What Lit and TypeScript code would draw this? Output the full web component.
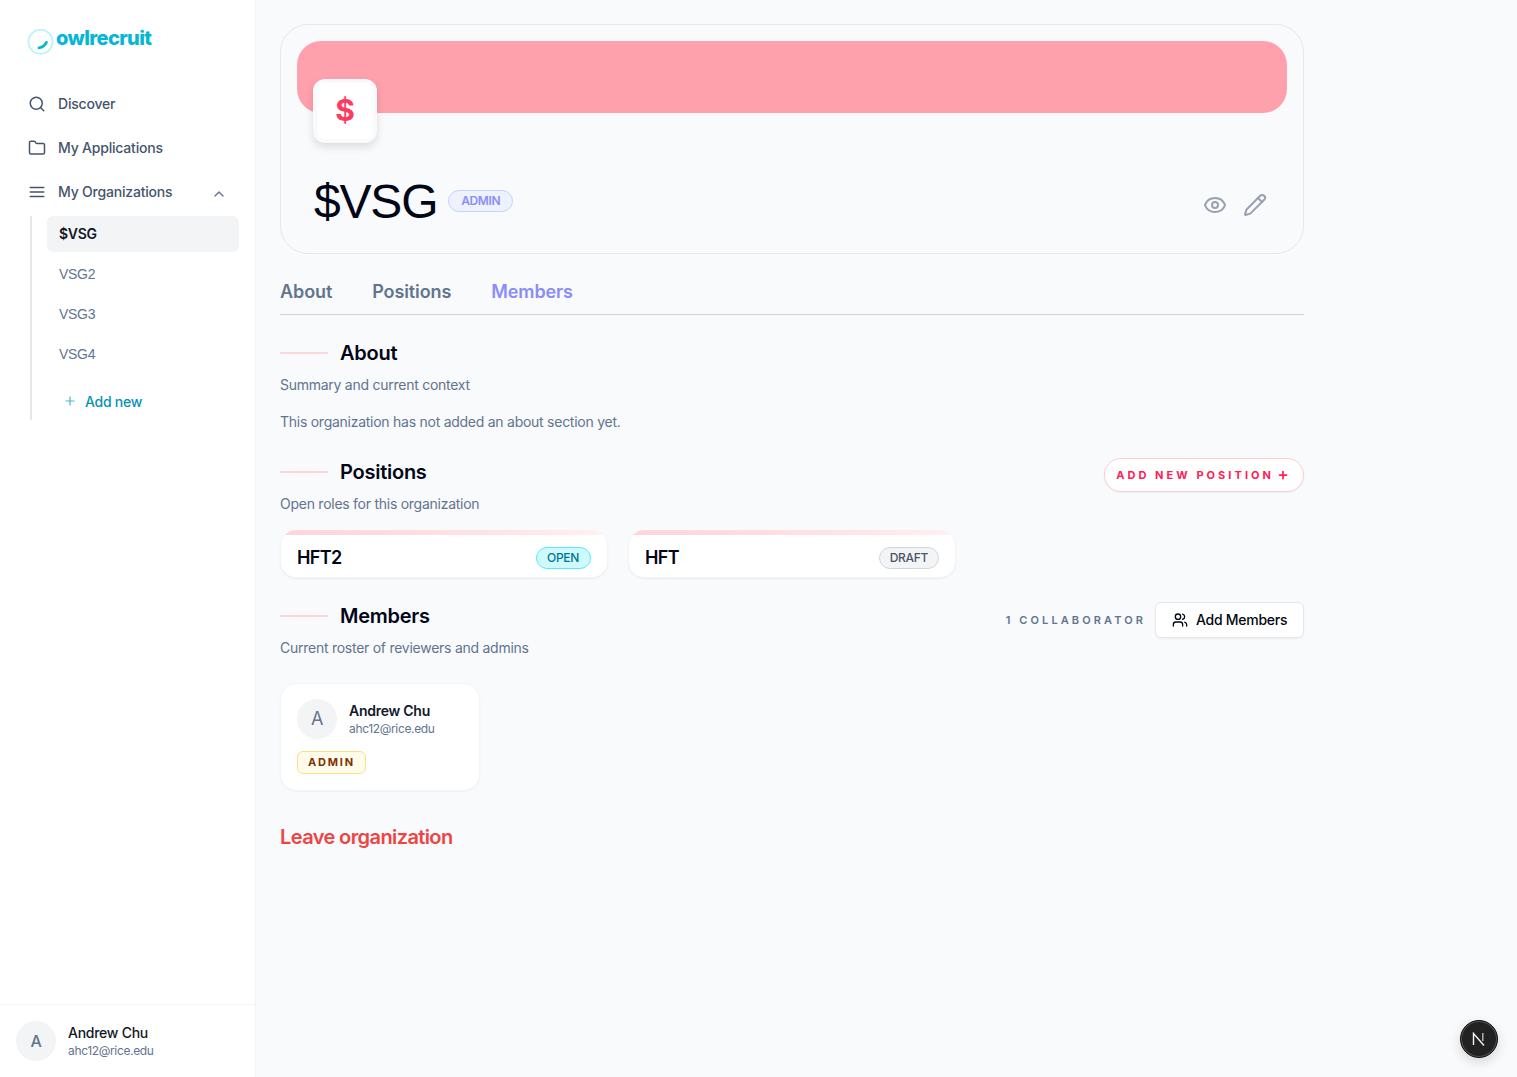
import { LitElement, html, css, svg } from 'lit';
import { customElement } from 'lit/decorators.js';

const icon = (size: number, body: unknown, sw = 2) => html`<svg width=${size} height=${size} viewBox="0 0 24 24" fill="none" stroke="currentColor" stroke-width=${sw} stroke-linecap="round" stroke-linejoin="round">${body}</svg>`;

// lucide shapes
const search = svg`<path d="m21 21-4.34-4.34"/><circle cx="11" cy="11" r="8"/>`;
const folder = svg`<path d="M20 20a2 2 0 0 0 2-2V8a2 2 0 0 0-2-2h-7.9a2 2 0 0 1-1.69-.9L9.6 3.9A2 2 0 0 0 7.93 3H4a2 2 0 0 0-2 2v13a2 2 0 0 0 2 2Z"/>`;
const menu = svg`<path d="M3 6h18M3 12h18M3 18h18"/>`;
const chevron = svg`<path d="m18 15-6-6-6 6"/>`;
const plus = svg`<path d="M5 12h14M12 5v14"/>`;
const eye = svg`<path d="M2.062 12.348a1 1 0 0 1 0-.696 10.75 10.75 0 0 1 19.876 0 1 1 0 0 1 0 .696 10.75 10.75 0 0 1-19.876 0"/><circle cx="12" cy="12" r="3"/>`;
const pencil = svg`<path d="M21.174 6.812a1 1 0 0 0-3.986-3.987L3.842 16.174a2 2 0 0 0-.5.83l-1.321 4.352a.5.5 0 0 0 .623.622l4.353-1.32a2 2 0 0 0 .83-.497z"/><path d="m15 5 4 4"/>`;
const users = svg`<path d="M16 21v-2a4 4 0 0 0-4-4H6a4 4 0 0 0-4 4v2"/><circle cx="9" cy="7" r="4"/><path d="M22 21v-2a4 4 0 0 0-3-3.87"/><path d="M16 3.13a4 4 0 0 1 0 7.75"/>`;

@customElement('app-root')
export class AppRoot extends LitElement {
  static styles = css`
    :host {
      display: block;
      font-family: Inter, "Liberation Sans", sans-serif;
      letter-spacing: -0.26px;
      color: #030712;
    }
    * { box-sizing: border-box; }
    .page {
      display: flex;
      height: 1077px;
      overflow: hidden;
      background: #f8fafc;
      position: relative;
    }
    /* sidebar */
    .side {
      width: 256px;
      flex: none;
      background: #fff;
      border-right: 1px solid #f1f5f9;
      display: flex;
      flex-direction: column;
    }
    .side-top { flex: 1; padding: 24px 16px 0; }
    .logo { display: flex; align-items: flex-start; gap: 1px; height: 58px; padding-left: 11px; }
    .logo svg { margin-top: 4px; flex: none; }
    .logo span {
      font-size: 20px;
      font-weight: 800;
      line-height: 28px;
      letter-spacing: -0.6px;
      color: #06b6d4;
    }
    .nav { display: flex; align-items: center; gap: 12px; height: 44px; padding: 0 12px; font-size: 14px; font-weight: 500; letter-spacing: -0.2px; color: #45556c; }
    .nav svg { flex: none; }
    .nav .label { margin-bottom: 2px; }
    .nav .chev { display: flex; margin-left: auto; margin-top: 4px; color: #62748e; }
    .sub { margin-left: 14px; border-left: 2px solid #e5e7eb; padding-left: 15px; margin-top: 2px; height: 204px; }
    .org { display: flex; align-items: center; height: 36px; padding: 0 12px; margin-bottom: 4px; font-size: 14px; font-family: "Liberation Sans", sans-serif; color: #62748e; border-radius: 6px; letter-spacing: -0.3px; }
    .org.on { background: #f3f4f6; color: #111827; font-weight: 600; font-family: Inter, sans-serif; padding-bottom: 1px; }
    .add { display: flex; align-items: center; gap: 8px; height: 36px; margin-top: 11px; padding-left: 16px; font-size: 14px; font-weight: 500; color: #0891b2; }
    .add svg { color: #4fb3c9; }
    .me { display: flex; align-items: center; gap: 12px; height: 73px; padding: 0 16px; border-top: 1px solid #f1f5f9; }
    .av { width: 40px; height: 40px; border-radius: 50%; background: #f3f4f6; color: #62748e; display: flex; align-items: center; justify-content: center; font-size: 16px; font-weight: 500; flex: none; }
    .who b { display: block; font-size: 14px; font-weight: 500; line-height: 20px; color: #111827; }
    .who small { display: block; font-size: 12px; line-height: 16px; color: #62748e; letter-spacing: -0.35px; }
    /* main */
    .main { flex: 1; padding: 24px; min-width: 0; }
    .col { width: 1024px; }
    .head { height: 230px; border: 1px solid #e2e8f0; border-radius: 28px; padding: 16px; }
    .banner { height: 72px; border-radius: 24px; background: #ffa1ad; }
    .mark {
      width: 64px; height: 64px; margin: -34px 0 0 16px;
      border-radius: 12px; background: #fff; border: 4px solid #f8fafc;
      box-shadow: 0 4px 8px rgba(0,0,0,.12);
      display: flex; align-items: center; justify-content: center;
      font-size: 30px; font-weight: 700; color: #ff3b62; position: relative; padding-bottom: 2px;
    }
    .title-row { display: flex; align-items: center; margin: 28px 20px 0 17px; height: 60px; }
    .title-row h1 { margin: 2px 0 0; font: 400 48px/60px "Liberation Sans", sans-serif; letter-spacing: -1.2px; color: #020617; }
    .pill { display: inline-flex; align-items: center; border-radius: 999px; border: 1px solid; height: 22px; padding: 0 11px; font-size: 12px; font-weight: 500; letter-spacing: -0.3px; }
    .pill.admin { margin-left: 11px; padding: 0 12px 1px; background: #eef2ff; border-color: #c6d2ff; color: #8b8cf8; font-weight: 600; letter-spacing: -0.4px; }
    .tools { margin-left: auto; display: flex; gap: 16px; color: #99a1af; margin-top: 8px; }
    .tabs { display: flex; gap: 40px; height: 45px; margin-top: 16px; border-bottom: 1px solid #d1d5db; font-size: 18px; line-height: 44px; font-weight: 600; letter-spacing: -0.1px; color: #62748e; }
    .tabs .on { color: #8b8cf8; }
    .sec-head { display: flex; align-items: center; justify-content: space-between; }
    .sec-title { display: flex; align-items: center; gap: 12px; height: 28px; }
    .sec-title i { width: 48px; height: 2px; background: #ffd5da; }
    .sec-title h2 { margin: 0; font-size: 20px; line-height: 28px; font-weight: 600; letter-spacing: -0.25px; color: #020617; }
    .hint { font-size: 14px; line-height: 20px; color: #62748e; margin-top: 8px; }
    .about { margin-top: 24px; }
    .about p { margin: 17px 0 0; font-size: 14px; line-height: 20px; color: #62748e; }
    .positions { margin-top: 20px; }
    .positions .hint { margin-top: 2px; }
    .rule-btn {
      display: flex; align-items: center; gap: 3px; height: 34px; padding: 0 14px 0 11px; margin-top: 6px;
      border: 1px solid #ffccd3; border-radius: 999px; background: #fff;
      font-size: 11px; font-weight: 700; letter-spacing: 3.05px; color: #ff2056; box-shadow: 0 1px 2px rgba(0,0,0,.05);
    }
    .rule-btn svg { flex: none; }
    .cards { display: flex; gap: 20px; margin-top: 16px; }
    .pos {
      width: 328px; height: 48px; border-radius: 16px; background: #fff; overflow: hidden;
      border: 1px solid #f1f5f9; border-top: 0;
      box-shadow: 0 1px 2px rgba(0,0,0,.06);
    }
    .pos i { display: block; height: 5px; background: linear-gradient(90deg, #ffd5da, #ffe4e8 70%, #fff1f2); }
    .pos div { display: flex; align-items: center; justify-content: space-between; height: 42px; padding: 3px 16px 0; }
    .pos b { font: 600 18px/28px Inter, sans-serif; letter-spacing: -0.6px; color: #020617; }
    .pill.open { background: #cefafe; border-color: #53eafd; color: #007595; padding: 0 11px 0 10px; }
    .pill.draft { background: #f3f4f6; border-color: #d1d5dc; color: #4a5565; padding: 0 10px; }
    .members { margin-top: 24px; }
    .members .sec-title { margin-top: -8px; }
    .members .hint { margin-top: 0; }
    .m-right { display: flex; align-items: center; gap: 9px; }
    .count { font-size: 11px; font-weight: 600; letter-spacing: 3.1px; color: #62748e; }
    .btn { display: flex; align-items: center; gap: 8px; height: 36px; width: 149px; padding: 0 0 1px 16px; border: 1px solid #e5e7eb; border-radius: 6px; background: #fff; font-size: 14px; font-weight: 500; box-shadow: 0 1px 2px rgba(0,0,0,.05); }
    .person { width: 200px; height: 108px; margin-top: 25px; padding: 15px 16px; border: 1px solid #f1f5f9; border-radius: 16px; background: #fff; box-shadow: 0 1px 2px rgba(0,0,0,.04); }
    .person .top { display: flex; align-items: center; gap: 12px; }
    .person .av { font-size: 18px; font-weight: 400; padding-bottom: 1px; }
    .person .who b { font-weight: 600; }
    .role { display: flex; width: fit-content; align-items: center; margin-top: 12px; height: 23px; padding: 0 10px 1px; border: 1px solid #ffdf85; border-radius: 6px; background: #fffbeb; font-size: 11px; font-weight: 700; letter-spacing: 1.8px; color: #7b3306; }
    .leave { margin-top: 32px; font-size: 20px; line-height: 28px; font-weight: 600; letter-spacing: -0.6px; color: #ef4444; }
    .dev { position: absolute; right: 19px; bottom: 19px; width: 38px; height: 38px; border-radius: 50%; background: #222; border: 1px solid #111; box-shadow: inset 0 0 0 1px #555, 0 4px 12px rgba(0,0,0,.15); display: flex; align-items: center; justify-content: center; }
  `;

  render() {
    return html`
      <div class="page">
        <aside class="side">
          <div class="side-top">
            <div class="logo">
              <svg width="28" height="28" viewBox="0 0 28 28" fill="none" stroke-linecap="round">
                <circle cx="13.5" cy="13.7" r="12" stroke="#c5f1f8" stroke-width="2"/>
                <path d="M12 19.8 C15 19.5 18 17.6 19.4 14.4" stroke="#06b6d4" stroke-width="2.8"/>
              </svg>
              <span>owlrecruit</span>
            </div>
            <div class="nav">${icon(18, search)}<span class="label">Discover</span></div>
            <div class="nav">${icon(18, folder)}<span class="label">My Applications</span></div>
            <div class="nav">${icon(18, menu)}<span class="label">My Organizations</span><span class="chev">${icon(16, chevron)}</span></div>
            <div class="sub">
              <div class="org on">$VSG</div>
              <div class="org">VSG2</div>
              <div class="org">VSG3</div>
              <div class="org">VSG4</div>
              <div class="add">${icon(14, plus)}Add new</div>
            </div>
          </div>
          <div class="me">
            <div class="av">A</div>
            <div class="who"><b>Andrew Chu</b><small>ahc12@rice.edu</small></div>
          </div>
        </aside>
        <main class="main">
          <div class="col">
            <section class="head">
              <div class="banner"></div>
              <div class="mark">$</div>
              <div class="title-row">
                <h1>$VSG</h1>
                <span class="pill admin">ADMIN</span>
                <div class="tools">${icon(24, eye)}${icon(24, pencil)}</div>
              </div>
            </section>
            <nav class="tabs"><span>About</span><span>Positions</span><span class="on">Members</span></nav>
            <section class="about">
              <div class="sec-title"><i></i><h2>About</h2></div>
              <div class="hint">Summary and current context</div>
              <p>This organization has not added an about section yet.</p>
            </section>
            <section class="positions">
              <div class="sec-head">
                <div class="sec-title"><i></i><h2>Positions</h2></div>
                <div class="rule-btn">ADD NEW POSITION ${icon(12, plus, 3.5)}</div>
              </div>
              <div class="hint">Open roles for this organization</div>
              <div class="cards">
                <div class="pos"><i></i><div><b>HFT2</b><span class="pill open">OPEN</span></div></div>
                <div class="pos"><i></i><div><b>HFT</b><span class="pill draft">DRAFT</span></div></div>
              </div>
            </section>
            <section class="members">
              <div class="sec-head">
                <div class="sec-title"><i></i><h2>Members</h2></div>
                <div class="m-right">
                  <span class="count">1 COLLABORATOR</span>
                  <div class="btn">${icon(16, users)}Add Members</div>
                </div>
              </div>
              <div class="hint">Current roster of reviewers and admins</div>
              <div class="person">
                <div class="top">
                  <div class="av">A</div>
                  <div class="who"><b>Andrew Chu</b><small>ahc12@rice.edu</small></div>
                </div>
                <span class="role">ADMIN</span>
              </div>
            </section>
            <div class="leave">Leave organization</div>
          </div>
        </main>
        <div class="dev">
          <svg width="14" height="14" viewBox="0 0 14 14" fill="none"><path d="M1.5 13V1.5L12 13.5" stroke="#f5f5f5" stroke-width="1.4"/><path d="M10.8 1v8" stroke="#bbb" stroke-width="1.4"/></svg>
        </div>
      </div>
    `;
  }
}
